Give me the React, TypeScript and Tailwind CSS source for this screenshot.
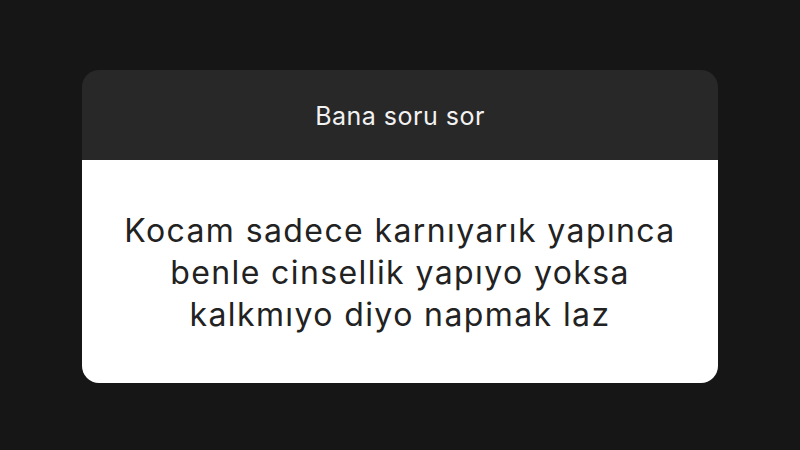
export default function App() {
  return (
    <div className="w-[800px] h-[450px] bg-[#161616] pt-[70px] px-[82px]" style={{ fontFamily: 'Inter, "Liberation Sans", sans-serif' }}>
      <div className="w-[636px] h-[313px] rounded-[17px] overflow-hidden flex flex-col">
        <div className="h-[90px] bg-[#282828] flex items-center justify-center pt-[3px]">
          <span className="text-[#f2f2f2] text-[25px] font-normal tracking-[0.5px]">Bana soru sor</span>
        </div>
        <div className="flex-1 bg-white flex items-center justify-center pt-[2px]">
          <p className="text-[#222222] text-[32px] leading-[42px] tracking-[1.4px] text-center">
            Kocam sadece karnıyarık yapınca<br />
            benle cinsellik yapıyo yoksa<br />
            kalkmıyo diyo napmak laz
          </p>
        </div>
      </div>
    </div>
  );
}
